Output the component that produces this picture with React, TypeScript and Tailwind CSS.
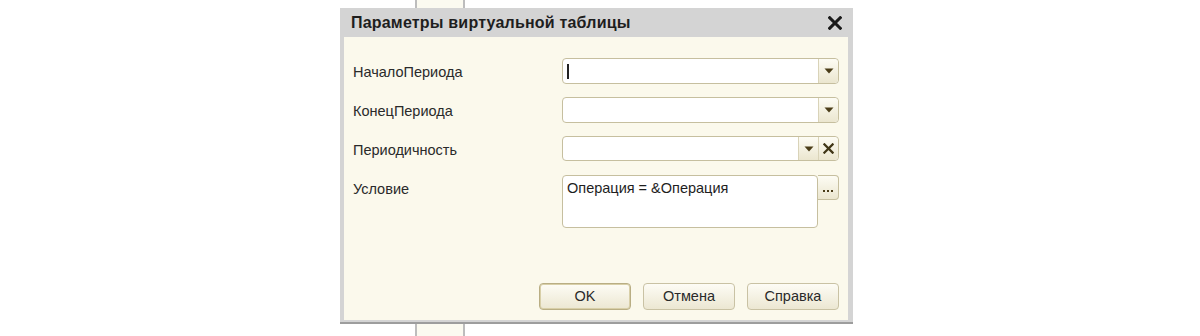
import React from "react";

const font = { fontFamily: '"Liberation Sans", Arial, sans-serif' };

// small dropdown arrow drawn as svg
const Arrow = () => (
  <svg width="10" height="6" viewBox="0 0 10 6">
    <path d="M0.5 0.5 H9.5 L5 5.5 Z" fill="#4a3c17" />
  </svg>
);

const Cross = ({ size = 11, stroke = "#3f3515", w = 2.4 }: { size?: number; stroke?: string; w?: number }) => (
  <svg width={size} height={size} viewBox="0 0 12 12">
    <path d="M1.5 1.5 L10.5 10.5 M10.5 1.5 L1.5 10.5" stroke={stroke} strokeWidth={w} strokeLinecap="square" />
  </svg>
);

const FieldButton = ({ children, last }: { children: React.ReactNode; last?: boolean }) => (
  <div
    className={`flex w-[20px] items-center justify-center border-l border-[#d9d3b8] bg-gradient-to-b from-[#fdfcf4] to-[#ebe6cf] ${
      last ? "rounded-r-[4px]" : ""
    }`}
  >
    {children}
  </div>
);

const Row = ({ label, children }: { label: string; children: React.ReactNode }) => (
  <div className="flex items-start">
    <div className="w-[209px] pt-[4px] text-[14.5px] text-[#2a2a2a]">{label}</div>
    {children}
  </div>
);

const Btn = ({ label, active }: { label: string; active?: boolean }) => (
  <button
    className={`h-[27px] w-[92px] rounded-[4px] border bg-gradient-to-b from-[#fdfcf5] to-[#ece7d2] text-[14.5px] text-[#2a2a2a] ${
      active ? "border-[#b9ae84] shadow-[inset_0_0_0_1px_#d8cfa8]" : "border-[#c9c2a4]"
    }`}
  >
    {label}
  </button>
);

export default function App() {
  return (
    <div className="relative h-[336px] w-[1200px] overflow-hidden bg-white" style={font}>
      {/* strip of the window behind */}
      <div className="absolute left-[415px] top-0 h-[336px] w-[50px] border-x-2 border-[#bdbdbd] bg-[#fbfaf0]" />

      <div className="relative ml-[340px] pt-[8px]">
        <div className="flex h-[316px] w-[513px] flex-col border-b-2 border-[#9d9d9d] bg-[#d4d4d4]">
          {/* title bar */}
          <div className="flex h-[29px] items-center justify-between pl-[11px] pr-[11px]">
            <span className="text-[16px] font-bold tracking-[0.2px] text-[#1e1e1e]">Параметры виртуальной таблицы</span>
            <Cross size={14} stroke="#1a1a1a" w={2.6} />
          </div>

          {/* body */}
          <div className="mb-[2px] ml-[4px] mr-[5px] flex flex-1 flex-col bg-[#fbf9ec] pb-[10px] pl-[9px] pr-[9px] pt-[21px]">
            <div className="flex flex-col gap-[13px]">
              <Row label="НачалоПериода">
                <div className="flex h-[26px] w-[277px] overflow-hidden rounded-[4px] border border-[#c6bf9f] bg-white">
                  <div className="flex flex-1 items-center pl-[4px]">
                    <div className="h-[15px] w-[2px] bg-[#222]" />
                  </div>
                  <FieldButton last>
                    <Arrow />
                  </FieldButton>
                </div>
              </Row>
              <Row label="КонецПериода">
                <div className="flex h-[26px] w-[277px] overflow-hidden rounded-[4px] border border-[#c6bf9f] bg-white">
                  <div className="flex-1" />
                  <FieldButton last>
                    <Arrow />
                  </FieldButton>
                </div>
              </Row>
              <Row label="Периодичность">
                <div className="flex h-[25px] w-[277px] overflow-hidden rounded-[4px] border border-[#c6bf9f] bg-white">
                  <div className="flex-1" />
                  <FieldButton>
                    <Arrow />
                  </FieldButton>
                  <FieldButton last>
                    <Cross />
                  </FieldButton>
                </div>
              </Row>
              <Row label="Условие">
                <div className="flex w-[277px] items-start">
                  <div className="h-[53px] flex-1 rounded-[4px] border border-[#c6bf9f] bg-white pl-[4px] pt-[2px] text-[14.5px] text-[#1e1e1e]">
                    Операция = &amp;Операция
                  </div>
                  <div className="flex h-[25px] w-[21px] items-end justify-center rounded-r-[4px] border border-l-0 border-[#c6bf9f] bg-gradient-to-b from-[#fdfcf4] to-[#ebe6cf] pb-[7px]">
                    <div className="flex gap-[2px]">
                      <div className="h-[2px] w-[2px] bg-[#4a3c17]" />
                      <div className="h-[2px] w-[2px] bg-[#4a3c17]" />
                      <div className="h-[2px] w-[2px] bg-[#4a3c17]" />
                    </div>
                  </div>
                </div>
              </Row>
            </div>

            <div className="mt-auto flex justify-end gap-[12px]">
              <Btn label="OK" active />
              <Btn label="Отмена" />
              <Btn label="Справка" />
            </div>
          </div>
        </div>
      </div>
    </div>
  );
}
